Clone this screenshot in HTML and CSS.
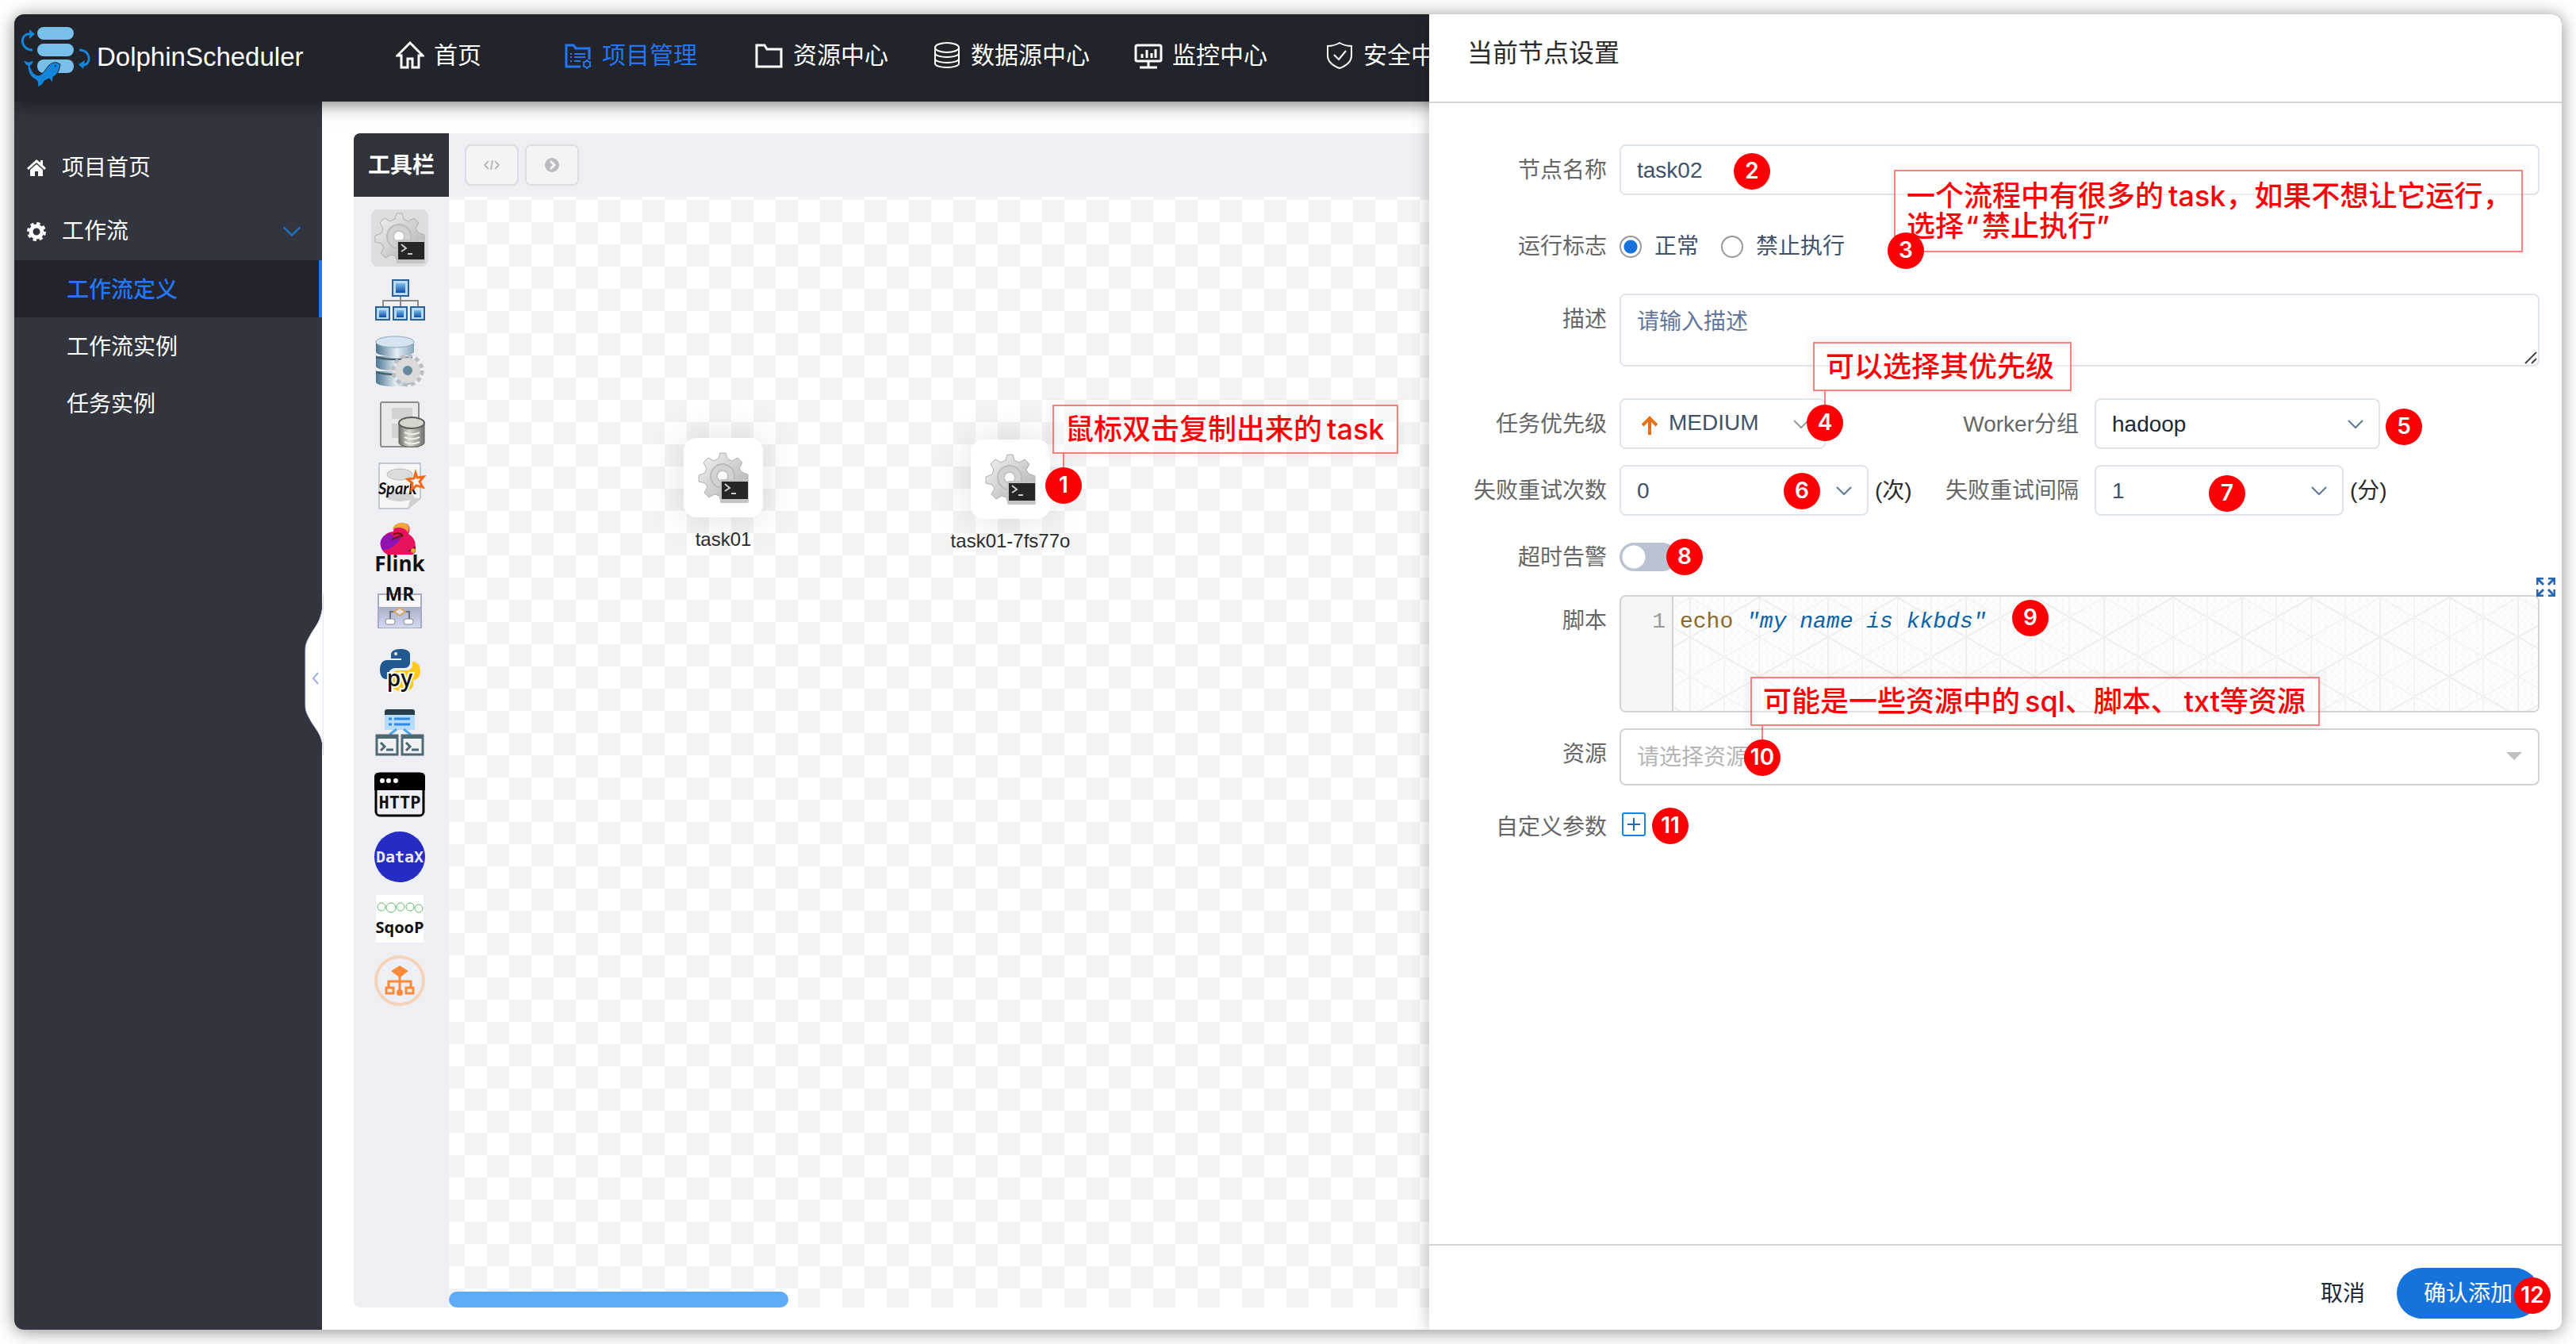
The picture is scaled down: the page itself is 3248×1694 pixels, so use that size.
FILE: index.html
```html
<!DOCTYPE html>
<html lang="zh-CN">
<head>
<meta charset="utf-8">
<title>DolphinScheduler</title>
<link rel="stylesheet" href="styles.css">
</head>
<body>
<svg class="defs" width="0" height="0" aria-hidden="true">
  <defs>
    <linearGradient id="silver" x1="0" y1="0" x2="1" y2="1"><stop offset="0" stop-color="#f4f4f4"/><stop offset="1" stop-color="#acacac"/></linearGradient>
    <linearGradient id="steel" x1="0" y1="0" x2="1" y2="0"><stop offset="0" stop-color="#4d7590"/><stop offset=".55" stop-color="#e4eef4"/><stop offset="1" stop-color="#87a6ba"/></linearGradient>
    <linearGradient id="blue" x1="0" y1="0" x2="0" y2="1"><stop offset="0" stop-color="#7db9f2"/><stop offset="1" stop-color="#0d4da6"/></linearGradient>
    <linearGradient id="drum" x1="0" y1="0" x2="1" y2="0"><stop offset="0" stop-color="#6d6f68"/><stop offset=".4" stop-color="#d8dad2"/><stop offset="1" stop-color="#74766f"/></linearGradient>
    <linearGradient id="lilac" x1="0" y1="0" x2="0" y2="1"><stop offset="0" stop-color="#a9aec6"/><stop offset="1" stop-color="#d3dbf5"/></linearGradient>
    <symbol id="chevron" viewBox="0 0 20 12"><path d="M1 1l9 9 9-9" fill="none" stroke="currentColor" stroke-width="2"/></symbol>
    <symbol id="shell" viewBox="0 0 64 64">
      <path d="M26 8l2-7h7l2 7 6 3 7-4 6 6-4 7 3 5 8 3v8l-8 2-2 6 4 7-5 5-8-3-5 2-2 8h-8l-2-8-6-2-7 4-6-6 4-7-3-5-8-2v-8l8-3 2-6-4-7 6-6 7 4z" fill="url(#silver)" stroke="#b0b0b0"/>
      <circle cx="31" cy="30" r="15" fill="#d2d2d2" stroke="#bcbcbc" stroke-width="2"/>
      <circle cx="31" cy="30" r="7" fill="#fbfbfb" stroke="#c4c4c4" stroke-width="2"/>
      <rect x="28" y="34" width="36" height="30" rx="2" fill="#c4c4c4"/>
      <rect x="30" y="37" width="33" height="22" fill="#262626"/>
      <path d="M34 40l6 5-6 4M42 52h6" fill="none" stroke="#ccc" stroke-width="2"/>
    </symbol>
  </defs>
</svg>

<div class="window">
  <header class="topbar">
    <a class="brand" href="#">
      <svg class="brand-logo" viewBox="0 0 90 76" aria-hidden="true">
        <g fill="#78c0ea"><rect x="21" y="1" width="46" height="16" rx="8"/><rect x="21" y="22" width="46" height="16" rx="8"/><rect x="21" y="42" width="46" height="17" rx="8"/></g>
        <g fill="none" stroke="#1485d8" stroke-width="3"><path d="M15 30C-1 30-2 8 13 10"/><path d="M74 30c16 0 15 20 4 19"/></g>
        <path d="M11 4l7 6-7 6zM81 43l-8 5 6 6z" fill="#1485d8"/>
        <path d="M4 42c3 3 5 3 7 3l5-2c0 4-2 6-4 7 2 7 5 12 11 12 5-1 8-7 12-12 3-3 7-5 11-4l4 2-1 5c-1 5-4 9-8 11l-1 7-4-5-6 3-3 5-6 3c1-4 1-6-1-9C11 64 9 56 9 50c-3-1-5-4-5-8z" fill="#1485d8" stroke="#22242c" stroke-width="1"/>
        <circle cx="44" cy="50" r="1" fill="#22242c"/>
      </svg>
      <span>DolphinScheduler</span>
    </a>
    <nav class="topnav">
      <a class="nav-item nav-item--home" href="#">
        <svg viewBox="0 0 36 36" aria-hidden="true"><path d="M18 2L2 18h5v15h8V22h6v11h8V18h5z" fill="none" stroke="currentColor" stroke-width="3"/></svg>首页</a>
      <a class="nav-item nav-item--roomy is-active" href="#">
        <svg viewBox="0 0 36 36" aria-hidden="true"><path d="M21 32H3V5h9l3 4h17v14" fill="none" stroke="currentColor" stroke-width="3"/><path d="M8 16h2M13 16h14M8 20h2M13 20h14M8 25h2M13 25h8" fill="none" stroke="currentColor" stroke-width="2"/><circle cx="29" cy="29" r="4" fill="none" stroke="currentColor" stroke-width="2"/><path d="M29 23v2M29 33v2M24 26l2 1M32 31l2 1M34 26l-2 1M26 31l-2 1" stroke="currentColor" stroke-width="2"/></svg>项目管理</a>
      <a class="nav-item" href="#">
        <svg viewBox="0 0 36 36" aria-hidden="true"><path d="M2 32V5h10l3 5h18v22z" fill="none" stroke="currentColor" stroke-width="3"/></svg>资源中心</a>
      <a class="nav-item" href="#">
        <svg viewBox="0 0 36 36" aria-hidden="true"><path d="M3 8v20c0 3 7 5 15 5s15-2 15-5V8M3 15c0 3 7 5 15 5s15-2 15-5M3 22c0 3 7 5 15 5s15-2 15-5" fill="none" stroke="currentColor" stroke-width="2"/><ellipse cx="18" cy="8" rx="15" ry="6" fill="none" stroke="currentColor" stroke-width="2"/></svg>数据源中心</a>
      <a class="nav-item nav-item--roomy" href="#">
        <svg viewBox="0 0 36 36" aria-hidden="true"><rect x="2" y="5" width="32" height="20" rx="2" fill="none" stroke="currentColor" stroke-width="3"/><path d="M18 25v7M7 33h22M10 21v-5M16 21V11M22 21v-6M27 21V10" stroke="currentColor" stroke-width="3"/></svg>监控中心</a>
      <a class="nav-item" href="#">
        <svg viewBox="0 0 36 36" aria-hidden="true"><path d="M18 2C13 5 8 6 3 6v12c0 8 7 13 15 16 8-3 15-8 15-16V6c-5 0-10-1-15-4zM11 17l6 6 9-11" fill="none" stroke="currentColor" stroke-width="2"/></svg>安全中心</a>
    </nav>
  </header>

  <div class="workspace">
    <aside class="sidebar">
      <a class="side-item" href="#"><svg class="side-icon" viewBox="0 0 24 24" aria-hidden="true"><path d="M12 1L0 12l2 2 10-9 10 9 2-2-4-4V2h-3v3z" fill="currentColor"/><path d="M12 7l-8 7v8h6v-6h4v6h6v-8z" fill="currentColor"/></svg>项目首页</a>
      <a class="side-item" href="#"><svg class="side-icon" viewBox="0 0 24 24" aria-hidden="true"><circle cx="12" cy="12" r="7" fill="none" stroke="currentColor" stroke-width="5"/><circle cx="12" cy="12" r="10" fill="none" stroke="currentColor" stroke-width="4" stroke-dasharray="4.2 3.65"/></svg>工作流<svg class="side-chevron" viewBox="0 0 20 12" aria-hidden="true"><use href="#chevron"/></svg></a>
      <a class="side-sub is-active" href="#">工作流定义</a>
      <a class="side-sub" href="#">工作流实例</a>
      <a class="side-sub" href="#">任务实例</a>
      <button class="side-toggle" type="button" aria-label="收起">
        <svg viewBox="0 0 24 204" aria-hidden="true"><path d="M24 0C23 36 15 38 7 53C3 60 1 64 1 72v68c0 8 2 12 6 19 8 15 16 17 17 45z" fill="#fff" stroke="#c5cff0"/><path d="M17 100l-6 7 6 7" fill="none" stroke="#9db0e6" stroke-width="2"/></svg>
      </button>
    </aside>

    <main class="stage">
      <div class="tools">
        <h2 class="tools-title">工具栏</h2>
        <ul class="palette">
          <li class="is-active"><svg viewBox="0 0 64 64"><use href="#shell"/></svg></li>
          <li><svg viewBox="0 0 64 64"><path d="M11 41V33h44v8M33 26v15" fill="none" stroke="#8a8a8a" stroke-width="2"/><g fill="#b9dcf6" stroke="#2a6196" stroke-width="2"><rect x="23" y="7" width="20" height="20"/><rect x="2" y="41" width="17" height="16"/><rect x="24" y="41" width="17" height="16"/><rect x="46" y="41" width="17" height="16"/></g><g fill="url(#blue)"><rect x="27" y="11" width="12" height="12"/><rect x="6" y="45" width="9" height="9"/><rect x="28" y="45" width="9" height="9"/><rect x="50" y="45" width="9" height="9"/></g></svg></li>
          <li><svg viewBox="0 0 64 64"><g fill="url(#steel)"><path d="M2 44v14c4 7 42 7 46 0V44z"/><path d="M2 25v13c4 7 42 7 46 0V25z"/><path d="M2 6v14c4 7 44 7 48 0V6z"/></g><path d="M2 24c8 5 38 5 46 0v3c-8 4-38 4-46 0zM2 43c8 5 38 5 46 0v3c-8 4-38 4-46 0z" fill="#45606f"/><ellipse cx="26" cy="7" rx="24" ry="7" fill="#d5e4ee" stroke="#8aa9bd"/><circle cx="42" cy="43" r="17" fill="none" stroke="#bdbdbd" stroke-width="7" stroke-dasharray="5 3.9"/><circle cx="42" cy="43" r="11" fill="#67899d" stroke="#dadada" stroke-width="10"/></svg></li>
          <li><svg viewBox="0 0 64 64"><rect x="8" y="5" width="48" height="56" rx="2" fill="#e9e9e9" stroke="#8d8d8d" stroke-width="2"/><path d="M22 12h26v14H22zM22 32h10v18H22z" fill="#d2d2d2"/><path d="M31 31v25c0 7 32 7 32 0V31z" fill="url(#drum)" stroke="#5c5d58"/><path d="M38 43c6 3 13 3 19 0M38 49c6 3 13 3 19 0M38 55c6 3 13 3 19 0" fill="none" stroke="#f0f0ea" stroke-width="2"/><ellipse cx="47" cy="31" rx="16" ry="7" fill="#d5d7cf" stroke="#5c5d58" stroke-width="2"/></svg></li>
          <li><svg viewBox="0 0 64 64"><path d="M6 4h52v44L42 61H6z" fill="#f6f6f6" stroke="#c3c7d0" stroke-width="2"/><ellipse cx="32" cy="18" rx="16" ry="7" fill="#dcdcdc" stroke="#bbb"/><path d="M42 61l4-14 12 1z" fill="#d0d0d0"/><ellipse cx="32" cy="46" rx="18" ry="6" fill="#d2d2d2"/><text x="5" y="43" class="t-spark">Spark</text><path d="M52 16l2 6 8-1-5 6 4 7-8-2-6 5 1-8-6-5 8-1z" fill="#fff" stroke="#ee6b1f" stroke-width="3"/></svg></li>
          <li><svg viewBox="0 0 64 64"><path d="M8 30c-2-10 8-18 16-18 0-8 8-12 16-10 6 2 5 9 3 13 8 5 10 12 8 18 2 3 0 7-3 8H17c-5-2-8-6-9-11z" fill="#e6115f"/><path d="M8 30c-2-8 4-14 12-16 4 6 10 6 14 4-2 8-14 18-24 17z" fill="#9213b3"/><path d="M23 9c2-7 10-10 17-7 5 2 4 8 2 11-3-6-12-8-19-4z" fill="#f0a53c"/><path d="M24 16c6-4 13-1 11 3M22 22l12-5M45 36l6-4v5z" fill="none" stroke="#6b1a12" stroke-width="2"/><circle cx="49" cy="36" r="3" fill="#e8a02c"/><text x="32" y="62" class="t-flink">Flink</text></svg></li>
          <li><svg viewBox="0 0 64 64"><rect x="5" y="13" width="54" height="42" fill="#f8f8fb" stroke="#a7abc0" stroke-width="2"/><rect x="6" y="29" width="52" height="26" fill="url(#lilac)"/><path d="M20 45V35h24v10" fill="none" stroke="#6e7080" stroke-width="2"/><path d="M32 30l7 5-7 5-7-5z" fill="#e6e3e6" stroke="#d4a26c" stroke-width="2"/><rect x="14" y="44" width="12" height="7" rx="3" fill="#fff" stroke="#888"/><rect x="37" y="44" width="12" height="7" rx="3" fill="#fff" stroke="#888"/><text x="32" y="21" class="t-mr">MR</text></svg></li>
          <li><svg viewBox="0 0 64 64"><path d="M48 20c7 0 10 5 10 12 0 6-3 11-9 11v6c0 5-5 8-14 8-8 0-13-3-13-8V38c0-4 3-7 8-7h10c5 0 8-3 8-7z" fill="#ffca1d"/><path d="M33 4c-8 0-12 3-12 7v5h13v2H16C10 18 7 23 7 30c0 7 3 12 8 12h3v-6c0-5 4-8 9-8h11c4 0 7-3 7-7V11c0-4-4-7-12-7z" fill="#20588f"/><circle cx="27" cy="10" r="2" fill="#fff"/><text x="32" y="51" class="t-py">py</text></svg></li>
          <li><svg viewBox="0 0 64 64"><path d="M13 6h38v22H13z" fill="#b5dcfa"/><path d="M13 9V5c0-2 1-3 3-3h32c2 0 3 1 3 3v4z" fill="#253f4b"/><path d="M18 14h4M25 14h20M18 21h4M25 21h20" stroke="#2f87ea" stroke-width="3"/><path d="M28 27l-9 7M37 27l9 7" stroke="#4da5f5" stroke-width="3"/><g fill="#f0f2f6" stroke="#4d6873" stroke-width="3"><rect x="3" y="35" width="26" height="24"/><rect x="35" y="35" width="26" height="24"/></g><path d="M3 37h26M35 37h26" stroke="#4d6873" stroke-width="4"/><path d="M8 44l5 5-5 5M15 53h9M40 44l5 5-5 5M47 53h9" fill="none" stroke="#4d6873" stroke-width="3"/></svg></li>
          <li><svg viewBox="0 0 64 64"><rect x="2" y="5" width="60" height="53" rx="5" fill="#eeeff5" stroke="#000" stroke-width="3"/><path d="M0 26V9c0-3 2-5 5-5h54c3 0 5 2 5 5v17z"/><circle cx="10" cy="14" r="3" fill="#fff"/><circle cx="18" cy="14" r="3" fill="#fff"/><circle cx="27" cy="14" r="3" fill="#fff"/><text x="32" y="49" class="t-http">HTTP</text></svg></li>
          <li><svg viewBox="0 0 64 64"><circle cx="32" cy="32" r="32" fill="#262bc4"/><text x="32" y="39" class="t-datax">DataX</text></svg></li>
          <li><svg viewBox="0 0 64 64"><path d="M2 2h60v60H2z" fill="#fff"/><g fill="none" stroke="#5dbb6b" stroke-width="1"><circle cx="9" cy="17" r="5"/><circle cx="21" cy="18" r="6"/><circle cx="33" cy="17" r="5"/><circle cx="45" cy="17" r="5"/><circle cx="56" cy="19" r="5"/></g><text x="32" y="50" class="t-sqoop">SqooP</text></svg></li>
          <li><svg viewBox="0 0 64 64"><circle cx="32" cy="32" r="30" fill="none" stroke="#f4d3ba" stroke-width="4"/><path d="M32 13l11 7-11 8-11-8z" fill="#fb8b3a"/><path d="M32 26v20M18 42v-9h28v9" fill="none" stroke="#fb8b3a" stroke-width="3"/><path d="M15 41h9v7h-9zM40 41h9v7h-9z" fill="none" stroke="#fb8b3a" stroke-width="3"/><circle cx="32" cy="47" r="4" fill="#fb8b3a"/></svg></li>
        </ul>
      </div>
      <div class="board">
        <div class="board-bar">
          <button class="mini" type="button" aria-label="查看变量"><svg viewBox="0 0 20 20" aria-hidden="true"><path d="M6 5l-5 5 5 5M14 5l5 5-5 5M11 4L9 16" fill="none" stroke="#b9bbc1" stroke-width="2"/></svg></button>
          <button class="mini" type="button" aria-label="运行"><svg viewBox="0 0 20 20" aria-hidden="true"><circle cx="10" cy="10" r="9" fill="#b9bbc1"/><path d="M8 5l5 5-5 5" fill="none" stroke="#f4f4f4" stroke-width="3"/></svg></button>
        </div>
        <div class="canvas">
          <div class="node node--first"><div class="node-box"><svg viewBox="0 0 64 64"><use href="#shell"/></svg></div><span>task01</span></div>
          <div class="node node--copy"><div class="node-box"><svg viewBox="0 0 64 64"><use href="#shell"/></svg></div><span>task01-7fs77o</span></div>
          <i class="lead lead--1"></i>
          <p class="note note--copy">鼠标双击复制出来的<b>task</b></p>
          <b class="pin pin--1">1</b>
          <div class="scrollbar"></div>
        </div>
      </div>
    </main>
  </div>

  <form class="drawer">
    <h1 class="drawer-title">当前节点设置</h1>
    <div class="drawer-body">
      <div class="field">
        <label for="name">节点名称</label>
        <div class="control">
          <input class="box" id="name" type="text" value="task02">
          <b class="pin pin--2">2</b>
          <p class="note note--flag">一个流程中有很多的<b>task</b>，如果不想让它运行，<br>选择<q>禁止执行</q></p>
          <b class="pin pin--3">3</b>
        </div>
      </div>
      <div class="field field--radio">
        <span class="label">运行标志</span>
        <div class="control radios">
          <label><input type="radio" name="flag" checked>正常</label>
          <label><input type="radio" name="flag">禁止执行</label>
        </div>
      </div>
      <div class="field field--desc">
        <label for="desc">描述</label>
        <div class="control">
          <textarea class="box" id="desc" placeholder="请输入描述"></textarea>
          <svg class="grip" viewBox="0 0 16 16" aria-hidden="true"><path d="M1 15L15 1M9 15l6-6" fill="none" stroke="#444" stroke-width="2"/></svg>
        </div>
      </div>
      <div class="field field--priority">
        <label for="priority">任务优先级</label>
        <div class="control pair">
          <div class="half">
            <div class="select select--priority">
              <svg class="up" viewBox="0 0 20 24" aria-hidden="true"><path d="M10 24V3M1 12l9-9 9 9" fill="none" stroke="#ea7018" stroke-width="4"/></svg>
              <select class="box" id="priority"><option>MEDIUM</option></select>
              <svg class="chev chev--muted" viewBox="0 0 20 12" aria-hidden="true"><use href="#chevron"/></svg>
            </div>
            <label class="inner" for="worker">Worker分组</label>
          </div>
          <div class="half">
            <div class="select select--worker"><select class="box" id="worker"><option>hadoop</option></select><svg class="chev" viewBox="0 0 20 12" aria-hidden="true"><use href="#chevron"/></svg></div>
          </div>
          <i class="lead lead--4"></i>
          <p class="note note--priority">可以选择其优先级</p>
          <b class="pin pin--4">4</b>
          <b class="pin pin--5">5</b>
        </div>
      </div>
      <div class="field field--retry">
        <label for="times">失败重试次数</label>
        <div class="control pair">
          <div class="half">
            <div class="select"><select class="box" id="times"><option>0</option></select><svg class="chev" viewBox="0 0 20 12" aria-hidden="true"><use href="#chevron"/></svg></div>
            <span class="unit">(次)</span>
            <label class="inner" for="interval">失败重试间隔</label>
          </div>
          <div class="half">
            <div class="select"><select class="box" id="interval"><option>1</option></select><svg class="chev" viewBox="0 0 20 12" aria-hidden="true"><use href="#chevron"/></svg></div>
            <span class="unit">(分)</span>
          </div>
          <b class="pin pin--6">6</b>
          <b class="pin pin--7">7</b>
        </div>
      </div>
      <div class="field field--retry">
        <label for="alarm">超时告警</label>
        <div class="control switch-row"><input class="switch" id="alarm" type="checkbox" role="switch"><b class="pin pin--8">8</b></div>
      </div>
      <div class="field field--script">
        <span class="label">脚本</span>
        <div class="control">
          <div class="editor">
            <span class="gutter">1</span>
            <div class="code">
              <svg class="mesh" aria-hidden="true">
                <defs>
                  <pattern id="dots" width="8.7" height="10" patternUnits="userSpaceOnUse"><path d="M0 0l8.7 10M8.7 0L0 10M4 0v10" stroke="#f9f9f9" fill="none"/><circle cx="4" cy="5" r="1" fill="#f2f2f2"/></pattern>
                  <pattern id="iso" x="108" y="1" width="174" height="100" patternUnits="userSpaceOnUse"><path d="M0 0l174 100M174 0L0 100M0 0v100M87 0v100" stroke="#efefef" stroke-width="2" fill="none"/><path d="M43 0v100M130 0v100M87 0l87 50-87 50L0 50z" stroke="#f4f4f4" stroke-width="2" fill="none"/></pattern>
                </defs>
                <rect width="100%" height="100%" fill="url(#dots)"/><rect width="100%" height="100%" fill="url(#iso)"/>
              </svg>
              <pre><span class="tok-cmd">echo</span> <span class="tok-str">"my name is kkbds"</span></pre>
            </div>
          </div>
          <button class="expand" type="button" aria-label="全屏"><svg viewBox="0 0 24 24" aria-hidden="true"><path d="M1 9V1h8M2 2l7 7M15 1h8v8M22 2l-7 7M1 15v8h8M2 22l7-7M23 15v8h-8M22 22l-7-7" fill="none" stroke="#2766b0" stroke-width="3"/></svg></button>
          <b class="pin pin--9">9</b>
        </div>
      </div>
      <div class="field field--res">
        <label for="res">资源</label>
        <div class="control">
          <input class="box box--tree" id="res" type="text" placeholder="请选择资源" readonly>
          <svg class="caret" viewBox="0 0 20 10" aria-hidden="true"><path d="M0 0h20L10 10z" fill="#bfbfbf"/></svg>
          <i class="lead lead--10"></i>
          <p class="note note--res">可能是一些资源中的<b>sql</b>、脚本、<b>txt</b>等资源</p>
          <b class="pin pin--10">10</b>
        </div>
      </div>
      <div class="field field--custom">
        <span class="label">自定义参数</span>
        <div class="control">
          <button class="add" type="button" aria-label="添加参数"><svg viewBox="0 0 30 30" aria-hidden="true"><rect x="1" y="1" width="28" height="28" rx="2" fill="none" stroke="#1685e0" stroke-width="2"/><path d="M15 7v16M7 15h16" stroke="#1a6cc0" stroke-width="2"/></svg></button>
          <b class="pin pin--11">11</b>
        </div>
      </div>
    </div>
    <footer class="drawer-foot">
      <button class="cancel" type="button">取消</button>
      <button class="confirm" type="submit">确认添加<b class="pin pin--12">12</b></button>
    </footer>
  </form>
</div>
</body>
</html>
```

FILE: styles.css
```css
* { box-sizing: border-box; }
body {
  margin: 0;
  height: 100vh;
  padding: 18px;
  background: #fff;
  font: 28px/40px "Liberation Sans", "Noto Sans CJK SC", sans-serif;
  color: #2b2b2b;
}
a { color: inherit; text-decoration: none; }
button { padding: 0; border: 0; background: none; font: inherit; color: inherit; }
input, select, textarea { margin: 0; font: inherit; color: inherit; }
svg { display: block; }
.defs { position: absolute; }

.window {
  position: relative;
  display: flex;
  flex-direction: column;
  height: 100%;
  overflow: hidden;
  border-radius: 12px;
  background: #fff;
}
body::before {
  content: "";
  position: absolute;
  inset: 18px;
  border-radius: 12px;
  box-shadow: 0 2px 22px rgba(0, 0, 0, .46);
}

/* top bar */
.topbar {
  position: relative;
  z-index: 2;
  display: flex;
  flex: none;
  height: 110px;
  background: #22242c;
  color: #fff;
  box-shadow: 0 4px 20px rgba(0, 0, 0, .5);
}
.brand { display: flex; gap: 6px; width: 481px; padding: 15px 0 0 8px; font-size: 33px; line-height: 78px; }
.brand-logo { width: 90px; height: 76px; }
.topnav { display: flex; align-items: center; gap: 56px; padding-bottom: 6px; font-size: 30px; white-space: nowrap; }
.nav-item { display: flex; align-items: center; gap: 12px; }
.nav-item svg { width: 36px; height: 36px; }
.nav-item--home { padding-right: 48px; }
.nav-item--roomy { padding-right: 17px; }
.is-active.nav-item { color: #2476f4; }

/* side menu */
.workspace { display: flex; flex: 1; min-height: 0; }
.sidebar { position: relative; flex: none; width: 388px; padding-top: 40px; background: #32353d; color: #fff; }
.side-item { display: flex; align-items: center; gap: 20px; height: 80px; padding: 8px 26px 0 16px; }
.side-icon { width: 24px; height: 24px; }
.side-chevron { width: 24px; height: 14px; margin-left: auto; color: #1f6fc4; }
.side-sub { display: block; height: 72px; padding-left: 66px; line-height: 75px; }
.side-sub.is-active { border-right: 4px solid #2476f4; background: #22232c; color: #2476f4; font-weight: 500; }
.side-toggle { position: absolute; right: -2px; top: 620px; width: 24px; height: 204px; }

/* editor stage */
.stage { display: flex; flex: 1; min-width: 0; padding: 40px 0 28px 40px; }
.tools { flex: none; width: 120px; background: #eeeff5; border-radius: 8px 0 0 8px; overflow: hidden; }
.tools-title { margin: 0; height: 80px; background: #303339; color: #fff; font-size: 28px; line-height: 82px; text-align: center; }
.palette { display: flex; flex-direction: column; align-items: center; gap: 6px; margin: 0; padding: 16px 4px 0 0; list-style: none; }
.palette li { width: 72px; height: 72px; padding: 4px; border-radius: 8px; }
.palette li.is-active { background: #dcdddf; }
.palette svg { width: 64px; height: 64px; overflow: visible; }
.palette text { font-family: "Open Sans", sans-serif; font-weight: 700; fill: #111; text-anchor: middle; }
.palette .t-spark { font: italic 700 20px Lato, sans-serif; text-anchor: start; }
.palette .t-flink { font-size: 26px; }
.palette .t-mr { font-size: 23px; }
.palette .t-py { font-size: 28px; font-weight: 600; paint-order: stroke; stroke: #fff; stroke-width: 4px; }
.palette .t-http { font: 700 22px "DejaVu Sans Mono", monospace; }
.palette .t-datax { font: 700 20px "DejaVu Sans Mono", monospace; fill: #e8e9fb; }
.palette .t-sqoop { font-size: 20px; }

.board { display: flex; flex-direction: column; flex: 1; min-width: 0; }
.board-bar { display: flex; align-items: center; gap: 8px; flex: none; height: 80px; padding-left: 20px; background: #eeeff5; }
.mini { display: grid; place-items: center; width: 68px; height: 52px; border: 2px solid #dcdde0; border-radius: 8px; background: #f4f4f4; }
.mini svg { width: 20px; height: 20px; }
.canvas {
  position: relative;
  flex: 1;
  background: conic-gradient(#fff 25%, #f3f3f3 0 50%, #fff 0 75%, #f3f3f3 0) 20px 4px / 56px 56px;
}
.node { position: absolute; display: flex; flex-direction: column; align-items: center; gap: 8px; width: 200px; font-size: 24px; }
.node--first { left: 246px; top: 304px; }
.node--copy { left: 608px; top: 306px; }
.node-box { width: 100px; height: 100px; padding: 18px; border-radius: 16px; background: #fff; box-shadow: 0 0 48px rgba(0, 0, 0, .12); }
.node-box svg { width: 64px; height: 64px; }
.scrollbar { position: absolute; left: 0; bottom: 0; width: 428px; height: 20px; border-radius: 10px; background: #5eabf6; }

/* drawer */
.drawer {
  position: absolute;
  z-index: 3;
  inset: 0 0 0 auto;
  display: flex;
  flex-direction: column;
  width: 1428px;
  background: #fff;
  box-shadow: 0 0 20px rgba(0, 0, 0, .25);
}
.drawer-title { flex: none; margin: 0; height: 112px; padding-left: 48px; border-bottom: 2px solid #d4d4d4; font-size: 32px; font-weight: 400; line-height: 98px; }
.drawer-body { flex: 1; padding: 52px 28px 0 0; }
.field { display: flex; gap: 16px; }
.field > label, .label { flex: none; width: 224px; line-height: 66px; text-align: right; color: #666; }
.control { position: relative; flex: 1; min-width: 0; }
.field--radio { margin-top: 30px; }
.field--desc { margin-top: 26px; }
.field--priority { margin-top: 40px; }
.field--retry { margin-top: 18px; }
.field--script { margin-top: 14px; }
.field--res { margin-top: 20px; }
.field--custom { margin-top: 20px; }

.box { display: block; width: 100%; height: 64px; padding: 2px 20px 0; border: 2px solid #dfe5ee; border-radius: 8px; background: #fff; color: #41526b; outline: 0; appearance: none; }
textarea.box { height: 92px; padding: 14px 20px; resize: none; }
.box::placeholder { color: #61769a; }
.box--tree { height: 72px; border-color: #d2d2d2; }
.box--tree::placeholder { color: #b5b5b5; }
.grip { position: absolute; right: 3px; bottom: 3px; width: 16px; height: 16px; }
.radios { display: flex; align-items: center; gap: 28px; height: 66px; color: #41526b; }
.radios label { display: flex; align-items: center; gap: 16px; }
.radios input { width: 28px; height: 28px; border: 2px solid #9a9a9a; border-radius: 50%; appearance: none; background: #fff; }
.radios input:checked { background: radial-gradient(circle, #1673dc 8px, #fff 9px); }
.pair { display: grid; grid-template-columns: 599px 1fr; height: 66px; }
.half { display: flex; align-items: center; height: 64px; }
.inner { margin-left: auto; padding: 2px 20px 0 0; color: #666; }
.unit { padding: 2px 0 0 8px; }
.select { position: relative; width: 314px; }
.select--priority { width: 260px; }
.select--worker { width: 360px; }
.select--priority .box { padding: 0 20px 2px 60px; }
.select--worker .box { color: #1d2735; }
.up { position: absolute; left: 28px; top: 22px; width: 20px; height: 24px; }
.chev { position: absolute; right: 21px; top: 27px; width: 20px; height: 12px; color: #5f7799; pointer-events: none; }
.chev--muted { color: #999; }
.switch-row { display: flex; align-items: center; height: 64px; }
.switch { width: 72px; height: 36px; border-radius: 18px; appearance: none; background: radial-gradient(circle at 18px 18px, #fff 14px, #b9c3d1 15px); }
.editor { display: flex; height: 148px; border: 2px solid #d2d2d2; border-radius: 8px; overflow: hidden; font-family: "Liberation Mono", monospace; }
.gutter { flex: none; width: 66px; padding: 12px 8px 0 0; border-right: 2px solid #d2d2d2; background: #f5f5f5; color: #999; text-align: right; }
.code { position: relative; flex: 1; padding: 12px 8px; background: #fdfdfd; }
.code pre { position: relative; margin: 0; font: inherit; }
.mesh { position: absolute; inset: 0; width: 100%; height: 100%; }
.tok-cmd { color: #8a6a2c; }
.tok-str { color: #0b62a4; font-style: italic; }
.expand { position: absolute; right: -20px; top: -22px; width: 24px; height: 24px; }
.caret { position: absolute; right: 22px; top: 30px; width: 20px; height: 10px; }
.add { display: block; width: 30px; height: 30px; margin: 14px 0 0 3px; }

.drawer-foot { display: flex; flex: none; align-items: flex-start; justify-content: flex-end; gap: 40px; height: 108px; padding: 28px 28px 0 0; border-top: 2px solid #d4d4d4; }
.cancel { height: 64px; padding-top: 2px; color: #1d2735; }
.confirm { position: relative; width: 180px; height: 64px; padding-top: 2px; border-radius: 32px; background: #1673dc; color: #fff; }

/* numbered review marks laid over the screen */
.pin {
  position: absolute;
  width: 46px;
  height: 46px;
  border-radius: 50%;
  background: #fd0006;
  color: #fff;
  font: 600 28px/44px Inter, sans-serif;
  text-align: center;
}
.note {
  position: absolute;
  margin: 0;
  padding: 10px 16px 10px 14px;
  border: 2px solid rgba(255, 0, 0, .5);
  background: rgba(255, 255, 255, .35);
  box-shadow: 0 0 0 8px rgba(0, 0, 0, .015);
  color: #fd0006;
  font: 500 36px/38px Inter, "Noto Sans CJK SC", sans-serif;
  white-space: nowrap;
}
.note b { margin-left: 6px; font-weight: 500; }
.note q { quotes: "“" "”"; }
.note q::before { margin: 0 4px 0 2px; }
.lead { position: absolute; width: 2px; height: 20px; background: rgba(255, 0, 0, .5); }
.pin--1 { left: 752px; top: 341px; }
.note--copy { left: 761px; top: 262px; }
.lead--1 { left: 774px; top: 323px; }
.pin--2 { left: 144px; top: 11px; }
.note--flag { left: 346px; top: 32px; right: 21px; height: 104px; padding-top: 12px; }
.pin--3 { left: 338px; top: 111px; }
.note--priority { left: 244px; top: -71px; padding-right: 20px; }
.lead--4 { left: 258px; top: -9px; }
.pin--4 { left: 236px; top: 8px; }
.pin--5 { left: 966px; top: 13px; }
.pin--6 { left: 207px; top: 10px; }
.pin--7 { left: 743px; top: 13px; }
.pin--8 { left: 59px; top: 9px; }
.pin--9 { left: 495px; top: 6px; }
.note--res { left: 165px; top: -65px; }
.lead--10 { left: 179px; top: -3px; }
.pin--10 { left: 157px; top: 14px; }
.pin--11 { left: 41px; top: 8px; }
.pin--12 { right: -14px; top: 12px; }
```
